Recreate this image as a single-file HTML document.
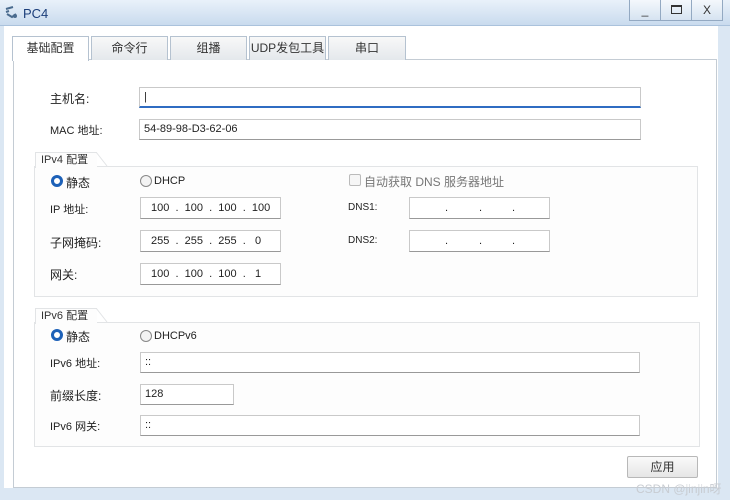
<!DOCTYPE html>
<html><head><meta charset="utf-8"><style>
*{box-sizing:border-box;margin:0;padding:0}
body{width:730px;height:500px;overflow:hidden;background:#dbe7f3;font-family:"Liberation Sans","Noto Sans CJK SC",sans-serif;font-size:12px;color:#222;position:relative}
.a{position:absolute}
.title{left:0;top:0;width:730px;height:26px;background:linear-gradient(#e9f1fa,#c9dbee);border-bottom:1px solid #aac2dc}
.wb{top:0;height:21px;border:1px solid #93a9c2;border-top:none;background:linear-gradient(#f4f8fc,#d6e3f1);text-align:center;font-size:12px;line-height:20px;color:#333}
.body{left:4px;top:26px;width:714px;height:462px;background:#fff}
.tab{top:36px;height:24px;border:1px solid #b5c2d0;border-bottom:none;background:linear-gradient(#f8f8f8,#e4e8ec);text-align:center;line-height:22px;font-size:12px;color:#333}
.panel{left:13px;top:59px;width:704px;height:429px;border:1px solid #c4ccd4;background:#fff}
.inp{height:21px;border:1px solid #c9c9c9;border-bottom:1px solid #999;background:#fff;font-size:11px;line-height:19px;padding-left:4px;color:#222}
.lbl{font-size:12px;color:#222}
.grp{border:1px solid #e2e4e6;background:#fdfdfd}
.gt{height:16px;font-size:11px;padding-left:5px;line-height:15px;color:#333;border:1px solid #e2e4e6;border-bottom:none;border-right:none;background:#fdfdfd}
.rad{width:12px;height:12px;border-radius:50%;border:1px solid #888;background:#f3f3f3}
.rs{width:12px;height:12px;border-radius:50%;border:3px solid #1d61b8;background:#fff}
.ip{font-size:11px;line-height:20px}
.d{position:absolute;top:0;font-size:11px;line-height:20px}
</style></head><body>
<div class="a title"></div>
<svg class="a" style="left:4px;top:5px" width="16" height="16" viewBox="0 0 16 16"><path d="M2 4 L9 2 M2 7 L5 6 M3 9 L8 12 L12 9" stroke="#4a6b8e" stroke-width="2" fill="none"/><circle cx="11" cy="11" r="2" fill="#4a6b8e"/></svg>
<div class="a" style="left:23px;top:6px;font-size:13px;color:#1b3e7a">PC4</div>
<div class="a wb" style="left:629px;width:32px">_</div>
<div class="a wb" style="left:660px;width:32px"><span style="display:inline-block;width:11px;height:9px;border:1px solid #333;border-top-width:2px;margin-top:5px"></span></div>
<div class="a wb" style="left:691px;width:32px">X</div>
<div class="a body"></div>
<div class="a panel"></div>
<div class="a tab" style="left:12px;width:77px;height:25px;background:#fff;border-color:#b5c2d0">基础配置</div>
<div class="a tab" style="left:91px;width:77px">命令行</div>
<div class="a tab" style="left:170px;width:77px">组播</div>
<div class="a tab" style="left:249px;width:77px">UDP发包工具</div>
<div class="a tab" style="left:328px;width:78px">串口</div>

<div class="a lbl" style="left:50px;top:90px">主机名:</div>
<div class="a inp" style="left:139px;top:87px;width:502px;border-bottom:2px solid #2f6cc2">|</div>
<div class="a lbl" style="left:50px;top:122px;font-size:11px">MAC 地址:</div>
<div class="a inp" style="left:139px;top:119px;width:502px">54-89-98-D3-62-06</div>

<div class="a grp" style="left:34px;top:166px;width:664px;height:131px"></div>
<div class="a gt" style="left:35px;top:152px;width:62px">IPv4 配置</div>
<svg class="a" style="left:96px;top:152px" width="12" height="15"><path d="M0 0 L11 14" stroke="#e2e4e6"/></svg>
<div class="a rs" style="left:51px;top:175px"></div>
<div class="a lbl" style="left:66px;top:174px">静态</div>
<div class="a rad" style="left:140px;top:175px"></div>
<div class="a" style="left:154px;top:175px;font-size:11px">DHCP</div>
<div class="a" style="left:349px;top:174px;width:12px;height:12px;border:1px solid #bbb;background:#f6f6f6;border-radius:2px"></div>
<div class="a" style="left:364px;top:173px;color:#777">自动获取 DNS 服务器地址</div>

<div class="a lbl" style="left:50px;top:201px;font-size:11px">IP 地址:</div>
<div class="a inp ip" style="left:140px;top:197px;width:141px;height:22px;padding-left:10px">100&nbsp;&nbsp;.&nbsp;&nbsp;100&nbsp;&nbsp;.&nbsp;&nbsp;100&nbsp;&nbsp;.&nbsp;&nbsp;100</div>
<div class="a lbl" style="left:50px;top:234px">子网掩码:</div>
<div class="a inp ip" style="left:140px;top:230px;width:141px;height:22px;padding-left:10px">255&nbsp;&nbsp;.&nbsp;&nbsp;255&nbsp;&nbsp;.&nbsp;&nbsp;255&nbsp;&nbsp;.&nbsp;&nbsp;&nbsp;0</div>
<div class="a lbl" style="left:50px;top:266px">网关:</div>
<div class="a inp ip" style="left:140px;top:263px;width:141px;height:22px;padding-left:10px">100&nbsp;&nbsp;.&nbsp;&nbsp;100&nbsp;&nbsp;.&nbsp;&nbsp;100&nbsp;&nbsp;.&nbsp;&nbsp;&nbsp;1</div>
<div class="a" style="left:348px;top:202px;font-size:10px">DNS1:</div>
<div class="a inp" style="left:409px;top:197px;width:141px;height:22px"><span class="d" style="left:35px">.</span><span class="d" style="left:69px">.</span><span class="d" style="left:102px">.</span></div>
<div class="a" style="left:348px;top:235px;font-size:10px">DNS2:</div>
<div class="a inp" style="left:409px;top:230px;width:141px;height:22px"><span class="d" style="left:35px">.</span><span class="d" style="left:69px">.</span><span class="d" style="left:102px">.</span></div>

<div class="a grp" style="left:34px;top:322px;width:666px;height:125px"></div>
<div class="a gt" style="left:35px;top:308px;width:62px">IPv6 配置</div>
<svg class="a" style="left:96px;top:308px" width="12" height="15"><path d="M0 0 L11 14" stroke="#e2e4e6"/></svg>
<div class="a rs" style="left:51px;top:329px"></div>
<div class="a lbl" style="left:66px;top:328px">静态</div>
<div class="a rad" style="left:140px;top:330px"></div>
<div class="a" style="left:154px;top:330px;font-size:11px">DHCPv6</div>
<div class="a lbl" style="left:50px;top:355px;font-size:11px">IPv6 地址:</div>
<div class="a inp" style="left:140px;top:352px;width:500px">::</div>
<div class="a lbl" style="left:50px;top:387px">前缀长度:</div>
<div class="a inp" style="left:140px;top:384px;width:94px">128</div>
<div class="a lbl" style="left:50px;top:418px;font-size:11px">IPv6 网关:</div>
<div class="a inp" style="left:140px;top:415px;width:500px">::</div>

<div class="a" style="left:627px;top:456px;width:71px;height:22px;border:1px solid #b8b8b8;border-radius:2px;background:linear-gradient(#fafafa,#e6e6e6);text-align:center;line-height:20px;color:#333">应用</div>
<div class="a" style="left:636px;top:480px;font-size:12px;color:#c8ccd2">CSDN @jinjin呀</div>
</body></html>
